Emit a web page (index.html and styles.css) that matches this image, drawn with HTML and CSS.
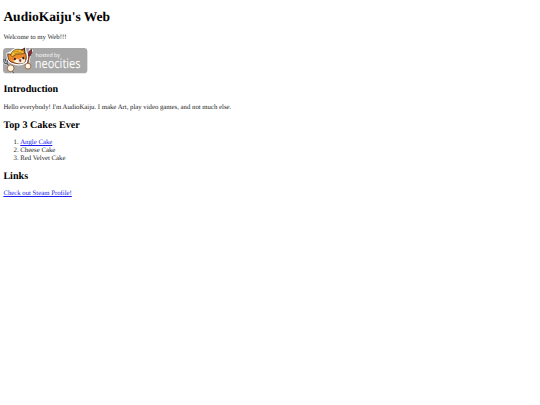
FILE: index.html
```html
<!DOCTYPE html>
<html>
  <head>
    <meta charset="utf-8" />
    <title>AudioKaiju's Web</title>
    <link rel="stylesheet" href="styles.css">
  </head>
  <body>
    <h1>AudioKaiju's Web</h1>
    <p>Welcome to my Web!!!</p>
    <a href="#neocities">
      <svg class="badge" viewBox="0 0 200 60" role="img" aria-label="Hosted by Neocities">
        <rect width="200" height="60" rx="8" fill="#a7a7a7" />
        <!-- fork -->
        <path d="M2 26v6q1 6 7 5l2-8M5 25l2 7M10 37l14 21" fill="none" stroke="#d5d5d5" stroke-width="6" />
        <path d="M2 26v6q1 6 7 5l2-8M5 25l2 7M10 37l15 22" fill="none" stroke="#444a54" stroke-width="2.5" />
        <!-- brush -->
        <path d="M56 46l5-28 6-15" fill="none" stroke="#fff" stroke-width="9" />
        <path d="M57 46l5-29" stroke="#8a4a2d" stroke-width="4" />
        <path d="M60 18l1-9 6-6 1 8-4 8z" fill="#9d2630" stroke="#43222a" stroke-width="2" />
        <!-- cat -->
        <path d="M11 14l8-3q12-12 24-8l8-2 3 12q4 12-1 20-10 9-26 4-14-4-15-14z" fill="#fff" stroke="#fff" stroke-width="6" stroke-linejoin="round" />
        <path d="M11 14l8 1q18-7 28-4l7 2q3 12-1 19-9 8-25 4-15-3-16-13z" fill="#ee8a2c" stroke="#4e2b20" stroke-width="2" />
        <path d="M18 17q3-12 15-14 15-1 19 10l-9 1q-12-2-21 7z" fill="#f4bd31" stroke="#6e4b1c" stroke-width="2" />
        <path d="M24 10l14-3M27 14l17-4" stroke="#bb811e" stroke-width="2" />
        <path d="M43 5l8-4 1 11" fill="#d9782a" stroke="#3e241d" stroke-width="2.5" />
        <path d="M24 31q7-7 13-4l6-3q8 0 10 6-3 6-11 7-12 0-18-6z" fill="#fff0dc" />
        <ellipse cx="28" cy="26" rx="2.5" ry="3" fill="#30221f" />
        <ellipse cx="48" cy="24" rx="2.5" ry="3" fill="#30221f" />
        <path d="M38 28l5-1-1 6q-4 0-4-5z" fill="#a63225" stroke="#5c2621" />
        <circle cx="18" cy="48" r="8" fill="#fff4df" stroke="#8e5634" stroke-width="2" />
        <circle cx="59" cy="43" r="7" fill="#fff4df" stroke="#8e5634" stroke-width="2" />
        <text class="badge-small" x="77" y="22" textLength="58" lengthAdjust="spacingAndGlyphs">hosted by</text>
        <text class="badge-name" x="75" y="48" textLength="109" lengthAdjust="spacingAndGlyphs">neocities</text>
      </svg>
    </a>
    <h2>Introduction</h2>
    <p>Hello everybody! I'm AudioKaiju. I make Art, play video games, and not much else.</p>
    <h2>Top 3 Cakes Ever</h2>
    <ol>
      <li><a href="#angle-cake">Angle Cake</a></li>
      <li>Cheese Cake</li>
      <li>Red Velvet Cake</li>
    </ol>
    <h2>Links</h2>
    <a href="#steam">Check out Steam Profile!</a>
  </body>
</html>
```
FILE: styles.css
```css
body {
  display: flow-root;
  margin: 3.375px;
  font-family: "Liberation Serif", "Times New Roman", serif;
  font-size: 6.75px;
  line-height: 7.6px;
  text-rendering: geometricPrecision;
}

h1 {
  margin: 5.2px 0 9.8px;
  font-size: 13.5px;
  line-height: 15.6px;
}

h2 {
  margin: 8.4px 0;
  font-size: 10.125px;
  line-height: 11.4px;
}

p,
ol {
  margin: 6.75px 0;
  color: #1c1c1c;
}

ol {
  padding-left: 16.875px;
}

a {
  color: #1a1aee;
  text-decoration-thickness: 0.5px;
}

.badge {
  width: 84.4px;
  height: 25.3px;
  margin-top: -0.8px;
  overflow: visible;
}

.badge text {
  fill: #fff;
  font-family: "Open Sans", sans-serif;
}

.badge-small {
  font-size: 13px;
}

.badge-name {
  font-size: 31px;
}
```
